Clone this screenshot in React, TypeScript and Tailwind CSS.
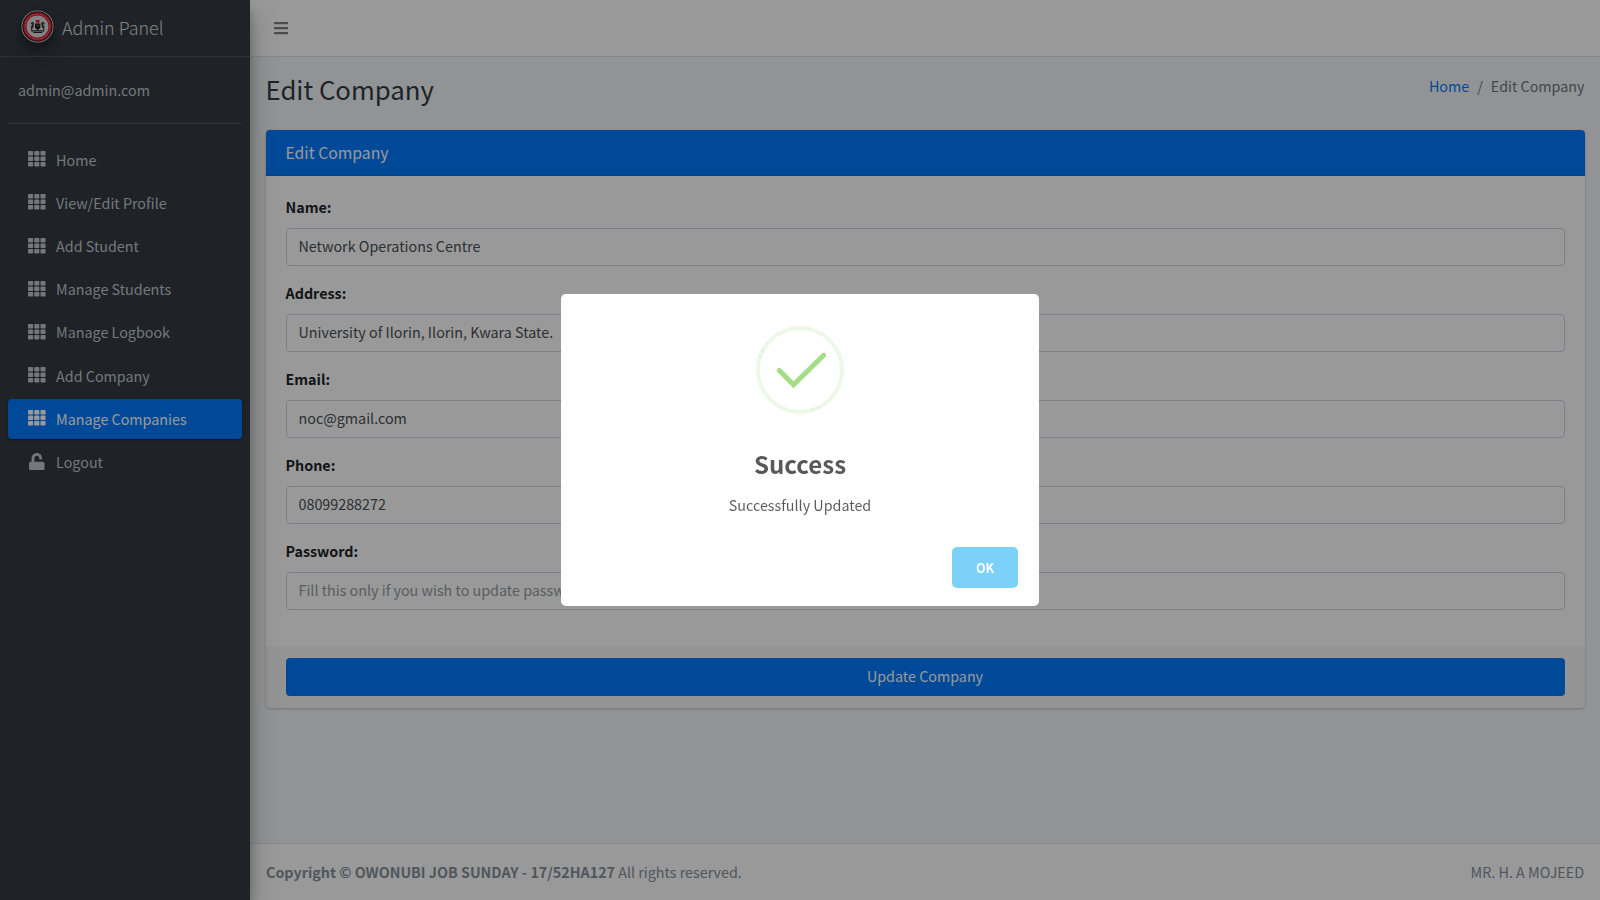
import { FaBars, FaTh, FaUnlock } from "react-icons/fa";

const navItems = [
  "Home",
  "View/Edit Profile",
  "Add Student",
  "Manage Students",
  "Manage Logbook",
  "Add Company",
  "Manage Companies",
  "Logout",
];

const fields = [
  { label: "Name:", value: "Network Operations Centre" },
  { label: "Address:", value: "University of Ilorin, Ilorin, Kwara State." },
  { label: "Email:", value: "noc@gmail.com" },
  { label: "Phone:", value: "08099288272" },
  { label: "Password:", value: "", placeholder: "Fill this only if you wish to update password" },
];

function Logo() {
  return (
    <svg
      viewBox="0 0 34 34"
      className="size-[33px] rounded-full shadow-[0_10px_20px_rgba(0,0,0,.19),0_6px_6px_rgba(0,0,0,.23)]"
    >
      <circle cx="17" cy="17" r="16.5" fill="#e8e8e8" />
      <circle cx="17" cy="17" r="15.7" fill="#2a1a1c" />
      <circle cx="17" cy="17" r="14.7" fill="#d8152b" />
      <circle cx="17" cy="17" r="12.9" fill="none" stroke="#f0a4ac" strokeWidth="1.1" strokeDasharray="1.1 1" />
      <circle cx="17" cy="17" r="11.3" fill="#dcdcdc" />
      <path d="M15 10.400h4.400l-.8 2.800h-2.800z" fill="#d8152b" />
      <path d="M14.400 14h5.600v4.200l-2.800 2.600-2.800-2.600z" fill="#1c1c1c" />
      <path d="M15.600 15l1.600 2 1.600-2" fill="none" stroke="#aaa" strokeWidth=".6" />
      <path
        d="M12.800 12.200l-2.800 1 .4 1.500 1.400.3-2 2.300.8 1.200-.6 2h1.200l1-2 .8-1.500.4-3.300zM21.600 12.200l2.800 1-.4 1.500-1.400.3 2 2.300-.8 1.200.6 2h-1.200l-1-2-.8-1.500-.4-3.300z"
        fill="#3c3c3c"
      />
      <path d="M10.500 21.500h13.400M12.500 23.200h9.400" stroke="#222" strokeWidth="1.200" />
    </svg>
  );
}

function Sidebar() {
  return (
    <aside className="relative z-10 flex w-[250px] shrink-0 flex-col bg-[#343a40] text-[#c2c7d0] shadow-[0_14px_28px_rgba(0,0,0,.25),0_10px_10px_rgba(0,0,0,.22)]">
      <div className="flex h-[57px] items-center border-b border-[#4b545c] pl-[21px]">
        <div className="-mt-[3px]">
          <Logo />
        </div>
        <span className="-mt-[2px] ml-[8px] text-[17.900px] leading-[30px] font-light text-white/80">Admin Panel</span>
      </div>
      <div className="mx-2 flex h-[67px] items-center border-b border-[#4f5962] pl-[10px]">
        <span>admin@admin.com</span>
      </div>
      <nav className="mx-2 mt-[15.600px] flex flex-col gap-[3.200px]">
        {navItems.map((item) => (
          <a
            key={item}
            className={
              item === "Manage Companies"
                ? "flex h-10 items-center rounded bg-[#007bff] pl-4 text-white shadow-[0_1px_3px_rgba(0,0,0,.12),0_1px_2px_rgba(0,0,0,.24)]"
                : "flex h-10 items-center pl-4"
            }
          >
            <span className="mr-[6.500px] flex w-[25.600px] justify-center pb-px">
              {item === "Logout" ? <FaUnlock size={17.6} /> : <FaTh size={17.6} />}
            </span>
            {item}
          </a>
        ))}
      </nav>
    </aside>
  );
}

function CompanyForm() {
  return (
    <section className="mr-[15px] ml-4 overflow-hidden rounded bg-white shadow-[0_0_1px_rgba(0,0,0,.125),0_1px_3px_rgba(0,0,0,.2)]">
      <h3 className="flex h-[46px] items-center border-b border-black/10 bg-[#007bff] px-[19.500px] text-[15.750px] text-white">
        Edit Company
      </h3>
      <div className="flex flex-col gap-[15px] px-5 pt-[19px] pb-9">
        {fields.map((f) => (
          <label key={f.label} className="flex flex-col">
            <span className="mb-[9px] -ml-[0.500px] leading-6 font-bold">{f.label}</span>
            <input
              readOnly
              value={f.value}
              placeholder={f.placeholder}
              className="h-[38px] rounded border border-[#ced4da] bg-white pr-3 pb-[3px] pl-[11.500px] text-[#495057] outline-none placeholder:text-[#939ba2]"
            />
          </label>
        ))}
      </div>
      <div className="bg-black/[.03] px-5 py-3">
        <button className="h-[38px] w-full rounded bg-[#007bff] pr-px pb-[2px] text-white">Update Company</button>
      </div>
    </section>
  );
}

function SuccessIcon() {
  return (
    <svg viewBox="0 0 88 88" className="mx-auto size-[88px]">
      <circle cx="44" cy="44" r="42" fill="none" stroke="#edf8e7" strokeWidth="4" />
      <path d="M23.300 44.500L37.500 58.800L67.700 29.300" fill="none" stroke="#a5dc86" strokeWidth="5" strokeLinecap="round" />
      <path d="M5.500 24.200l2.500 2.600M3.200 29.500l2.200 2.300M56.200 82.500l2.400 2.300M61.500 80.200l2.500 2.300" stroke="#c5e6b3" strokeWidth=".8" />
    </svg>
  );
}

function SuccessDialog() {
  return (
    <div className="fixed inset-0 z-20 flex items-center justify-center bg-black/40">
      <div role="dialog" className="flex h-[312px] w-[478px] flex-col rounded-[5px] bg-white pt-8 text-center">
        <SuccessIcon />
        <h2 className="mt-[31px] text-[24.100px] leading-[38px] font-bold text-black/65">Success</h2>
        <p className="mt-[10px] leading-6 text-black/65">Successfully Updated</p>
        <div className="mt-[30px] flex justify-end pr-[21px]">
          <button className="h-[41px] w-[66px] rounded-[5px] bg-[#7cd1f9] text-[12.500px] font-bold text-white">OK</button>
        </div>
      </div>
    </div>
  );
}

export default function App() {
  return (
    <div className="flex h-screen overflow-hidden bg-[#f4f6f9] font-['Noto_Sans_CJK_SC',sans-serif] text-[14.320px] leading-6 text-[#212529]">
      <Sidebar />
      <div className="flex min-w-0 flex-1 flex-col">
        <header className="flex h-[57px] shrink-0 items-center border-b border-[#dee2e6] bg-white pl-[23px] text-[#7f7f7f]">
          <FaBars size={16} />
        </header>
        <main className="flex-1">
          <div className="flex h-[73px] items-start justify-between pr-[15.500px] pl-4">
            <h1 className="mt-[14px] -ml-[0.500px] text-[25.750px] leading-[35px] text-[#343a40]">Edit Company</h1>
            <div className="mt-[17px] flex gap-2 text-[#6c757d]">
              <a className="text-[#007bff]">Home</a>
              <span>/</span>
              <span>Edit Company</span>
            </div>
          </div>
          <CompanyForm />
        </main>
        <footer className="flex h-[57px] shrink-0 items-center justify-between border-t border-[#dee2e6] bg-white pr-4 pl-4 text-[#869099]">
          <span>
            <b>Copyright © OWONUBI JOB SUNDAY - 17/52HA127</b> All rights reserved.
          </span>
          <span>MR. H. A MOJEED</span>
        </footer>
      </div>
      <SuccessDialog />
    </div>
  );
}
